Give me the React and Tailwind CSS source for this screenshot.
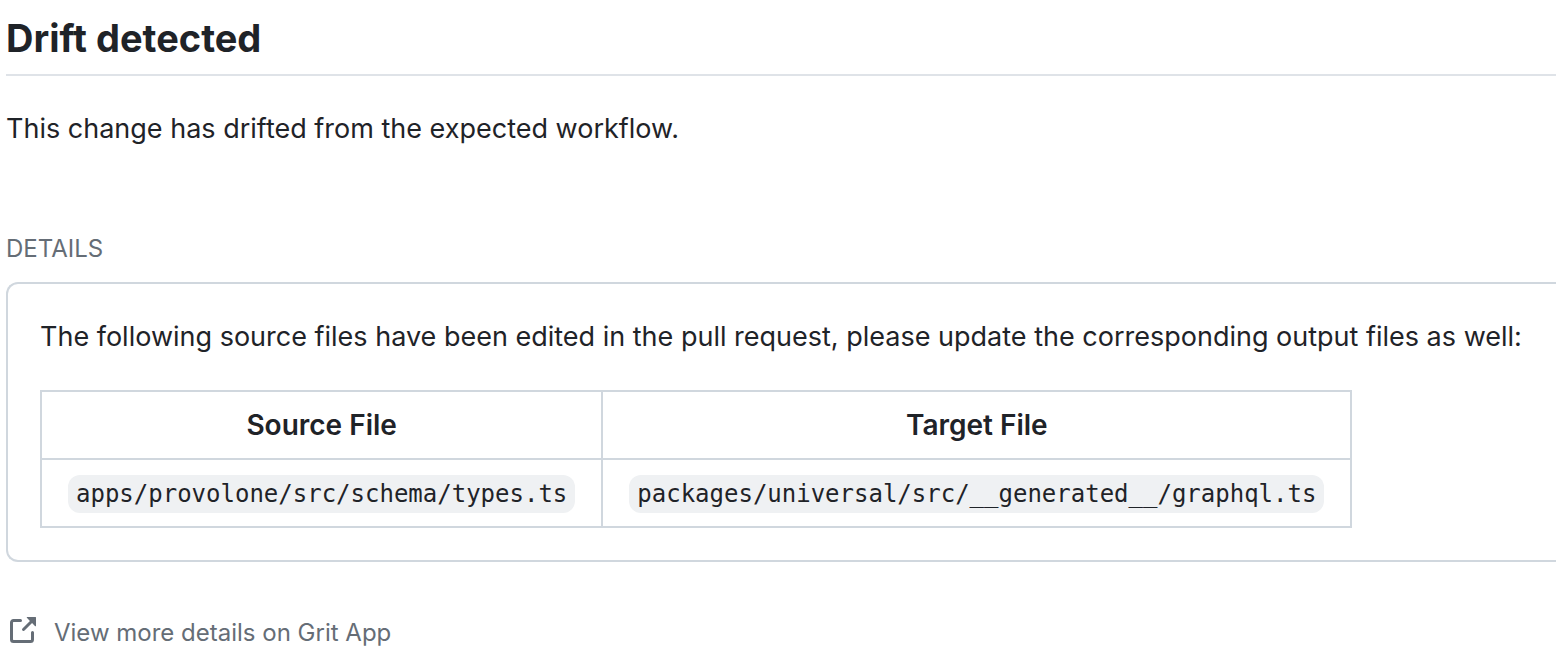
import React from 'react';

const rows = [
  {
    source: 'apps/provolone/src/schema/types.ts',
    target: 'packages/universal/src/__generated__/graphql.ts',
  },
];

function FileCell({ path }) {
  return (
    <td className="border-2 border-[#d0d7de] px-[26px] text-center">
      <code className="inline-block rounded-xl bg-[#eff1f3] px-2 font-['DejaVu_Sans_Mono',monospace] text-[24px] leading-[38px]">
        {path}
      </code>
    </td>
  );
}

export default function App() {
  return (
    <main className="overflow-hidden bg-white pt-4 pl-[6px] font-['Inter',sans-serif] text-[27px] leading-[42px] text-[#1f2328]">
      <h1 className="border-b-2 border-[#dfe3e8] pb-[14px] text-[38px] leading-[44px] font-bold">
        Drift detected
      </h1>
      <p className="mt-8">This change has drifted from the expected workflow.</p>

      <section className="mt-[81px]">
        <h2 className="text-[24px] leading-[36px] text-[#656d76]">DETAILS</h2>
        <div className="mt-[15px] rounded-l-xl border-y-2 border-l-2 border-[#d0d7de] p-8 pr-0">
          <p>
            The following source files have been edited in the pull request, please update the corresponding output files as well:
          </p>
          <table className="mt-8 border-collapse">
            <thead className="text-[28px]">
              <tr className="h-[68px]">
                <th scope="col" className="border-2 border-[#d0d7de] font-semibold">Source File</th>
                <th scope="col" className="border-2 border-[#d0d7de] font-semibold">Target File</th>
              </tr>
            </thead>
            <tbody>
              {rows.map((row) => (
                <tr key={row.source} className="h-[68px]">
                  <FileCell path={row.source} />
                  <FileCell path={row.target} />
                </tr>
              ))}
            </tbody>
          </table>
        </div>
      </section>

      <a href="#grit" className="mt-[53px] inline-flex items-start gap-4 text-[24px] leading-[36px] text-[#656d76]">
        <svg viewBox="0 0 16 16" className="size-8" fill="currentColor" aria-hidden="true">
          <path d="M3.75 2h3.5a.75.75 0 0 1 0 1.5h-3.5a.25.25 0 0 0-.25.25v8.5c0 .138.112.25.25.25h8.5a.25.25 0 0 0 .25-.25v-3.5a.75.75 0 0 1 1.5 0v3.5A1.75 1.75 0 0 1 12.25 14h-8.5A1.75 1.75 0 0 1 2 12.25v-8.5C2 2.784 2.784 2 3.75 2Zm6.854-1h4.146a.25.25 0 0 1 .25.25v4.146a.25.25 0 0 1-.427.177L13.03 4.03 9.28 7.78a.751.751 0 0 1-1.042-.018.751.751 0 0 1-.018-1.042l3.75-3.75-1.543-1.543A.25.25 0 0 1 10.604 1Z" />
        </svg>
        View more details on Grit App
      </a>
    </main>
  );
}
